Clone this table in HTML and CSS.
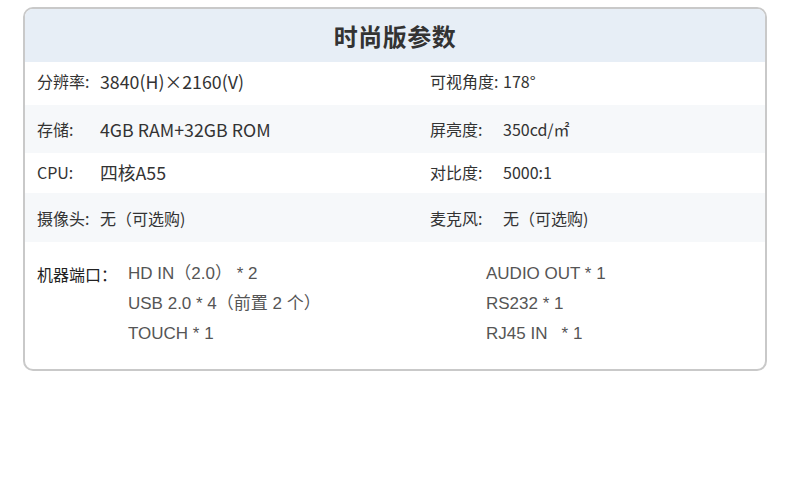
FILE: index.html
```html
<!DOCTYPE html>
<html lang="zh">
<head>
<meta charset="utf-8">
<link rel="stylesheet" href="styles.css">
</head>
<body>
<div class="card">
  <div class="head">时尚版参数</div>
  <div class="row r1">
    <div class="cell"><span class="lab">分辨率:</span><span class="val big">3840(H)×2160(V)</span></div>
    <div class="cell"><span class="lab lab-r">可视角度:</span><span class="val">178°</span></div>
  </div>
  <div class="row r2 alt">
    <div class="cell"><span class="lab">存储:</span><span class="val big">4GB RAM+32GB ROM</span></div>
    <div class="cell"><span class="lab lab-r">屏亮度:</span><span class="val">350cd/㎡</span></div>
  </div>
  <div class="row r3">
    <div class="cell"><span class="lab">CPU:</span><span class="val big">四核A55</span></div>
    <div class="cell"><span class="lab lab-r">对比度:</span><span class="val">5000:1</span></div>
  </div>
  <div class="row r4 alt">
    <div class="cell"><span class="lab">摄像头:</span><span class="val">无（可选购)</span></div>
    <div class="cell"><span class="lab lab-r">麦克风:</span><span class="val">无（可选购)</span></div>
  </div>
  <div class="ports">
    <div class="plab">机器端口：</div>
    <div class="pcol">
      <div>HD IN（2.0） * 2</div>
      <div>USB 2.0 * 4（前置 2 个）</div>
      <div>TOUCH * 1</div>
    </div>
    <div class="pcol">
      <div>AUDIO OUT * 1</div>
      <div>RS232 * 1</div>
      <div>RJ45 IN&nbsp;&nbsp; * 1</div>
    </div>
  </div>
</div>
</body>
</html>
```
FILE: styles.css
```css
html, body {
  margin: 0;
  padding: 0;
  background: #ffffff;
}
body {
  padding: 7px 23px 0;
  font-family: "Noto Sans CJK SC", "Noto Sans", sans-serif;
  color: #333333;
}
.card {
  width: 744px;
  box-sizing: border-box;
  border: 2px solid #c9c9c9;
  border-radius: 10px;
  overflow: hidden;
}
.head {
  height: 53px;
  padding-bottom: 1px;
  box-sizing: border-box;
  background: #e7eef6;
  display: flex;
  align-items: center;
  justify-content: center;
  font-size: 24px;
  font-weight: 700;
  color: #333333;
  letter-spacing: 0.5px;
}
.row {
  display: grid;
  grid-template-columns: 393px 1fr;
  align-items: center;
  padding-left: 12px;
  font-size: 16px;
  box-sizing: border-box;
}
.alt {
  background: #f6f8fa;
}
.r1 { height: 43px; padding-bottom: 6px; }
.r2 { height: 48px; }
.r3 { height: 40px; padding-bottom: 3px; }
.r4 { height: 49px; }
.cell {
  display: flex;
  align-items: center;
  white-space: nowrap;
}
.lab {
  width: 63px;
  flex: none;
}
.lab-r {
  width: 73px;
}
.big {
  font-size: 17.8px;
}
.ports {
  display: grid;
  grid-template-columns: 91px 358px 1fr;
  padding: 17px 0 20px 12px;
  line-height: 30px;
}
.plab {
  font-size: 16px;
  color: #222222;
}
.pcol {
  font-family: "Liberation Sans", Arial, "Noto Sans CJK SC", sans-serif;
  font-size: 17px;
  color: #555555;
  white-space: nowrap;
}
```
